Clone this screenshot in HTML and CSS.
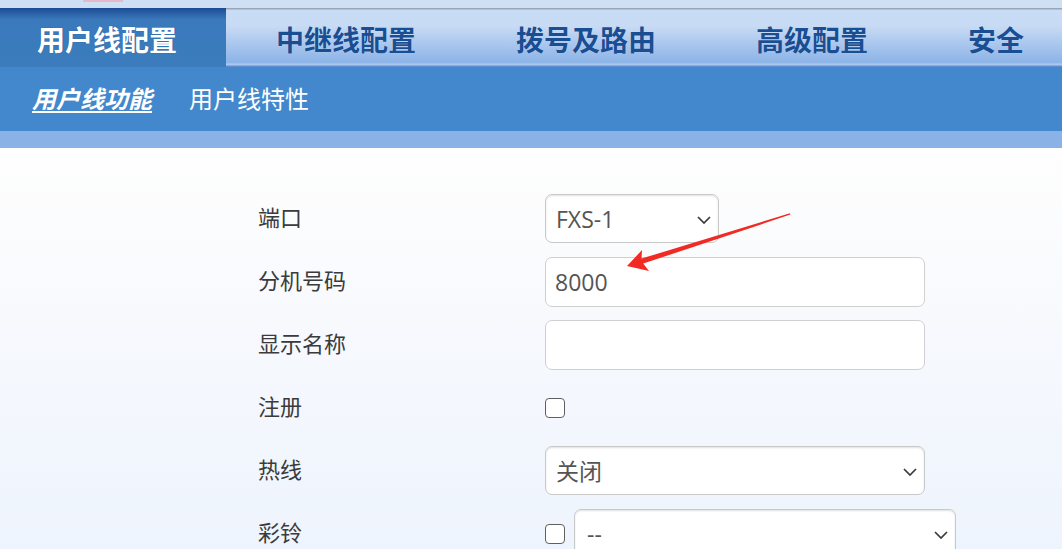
FILE: index.html
```html
<!DOCTYPE html>
<html lang="zh-CN">
<head>
<meta charset="utf-8">
<title>用户线配置</title>
<link rel="stylesheet" href="styles.css">
</head>
<body>
<div class="page">
  <div class="topstrip"><span class="logo-edge"></span></div>
  <nav class="tabs">
    <a class="tab active">用户线配置</a>
    <a class="tab">中继线配置</a>
    <a class="tab">拨号及路由</a>
    <a class="tab">高级配置</a>
    <a class="tab">安全</a>
  </nav>
  <div class="subnav">
    <a class="sub current">用户线功能</a>
    <a class="sub">用户线特性</a>
  </div>
  <div class="band"></div>
  <main class="content">
    <div class="form">
      <label class="lbl">端口</label>
      <div class="ctl">
        <div class="sel sel-short">
          <select><option>FXS-1</option></select>
          <svg class="chev" viewBox="0 0 14 8" width="14" height="8"><path d="M1 1 L7 7 L13 1" fill="none" stroke="#3a3a3a" stroke-width="1.7"/></svg>
        </div>
      </div>

      <label class="lbl">分机号码</label>
      <div class="ctl"><input class="txt" type="text" value="8000"></div>

      <label class="lbl">显示名称</label>
      <div class="ctl"><input class="txt" type="text" value=""></div>

      <label class="lbl">注册</label>
      <div class="ctl"><input class="chk" type="checkbox"></div>

      <label class="lbl">热线</label>
      <div class="ctl">
        <div class="sel sel-long">
          <select><option>关闭</option></select>
          <svg class="chev" viewBox="0 0 14 8" width="14" height="8"><path d="M1 1 L7 7 L13 1" fill="none" stroke="#3a3a3a" stroke-width="1.7"/></svg>
        </div>
      </div>

      <label class="lbl">彩铃</label>
      <div class="ctl ctl-pair">
        <input class="chk" type="checkbox">
        <div class="sel sel-long">
          <select><option>--</option></select>
          <svg class="chev" viewBox="0 0 14 8" width="14" height="8"><path d="M1 1 L7 7 L13 1" fill="none" stroke="#3a3a3a" stroke-width="1.7"/></svg>
        </div>
      </div>
    </div>
  </main>
  <svg class="annot" width="1062" height="549" viewBox="0 0 1062 549">
    <polygon points="627,266 642,250 641.5,258.6 790,213.2 790.4,214.6 643.2,263.6 649,271" fill="#f22a24"/>
  </svg>
</div>
</body>
</html>
```

FILE: styles.css
```css
html, body {
  margin: 0;
  padding: 0;
}
body {
  font-family: "Noto Sans CJK SC", "Noto Sans", sans-serif;
  background: #eef4fd;
}
.page {
  position: relative;
  width: 1062px;
  height: 549px;
  overflow: hidden;
  display: flex;
  flex-direction: column;
}
.topstrip {
  flex: 0 0 8px;
  background: #cfe0f5;
  display: flex;
}
.logo-edge {
  width: 40px;
  height: 2px;
  margin-left: 83px;
  background: #e7b9c8;
}
.tabs {
  flex: 0 0 59px;
  display: flex;
  align-items: stretch;
  background: linear-gradient(to bottom,
    #9aa6b6 0, #9aa6b6 1px,
    #c9dcf5 2px, #c8dbf4 30%,
    #a6c4ed 65%, #8cb4e7 92%,
    #a9c7ef 95%, #a9c7ef 97%,
    #5b8dd0 98%, #5b8dd0 100%);
}
.tab {
  display: flex;
  align-items: center;
  padding: 3px 50px 0;
  font-size: 28px;
  font-weight: 700;
  color: #1a4e93;
  text-shadow: 0 0 1px rgba(230, 240, 252, 0.9);
  white-space: nowrap;
}
.tab.active {
  padding-left: 37px;
  padding-right: 49px;
  color: #ffffff;
  text-shadow: 0 0 1px rgba(20, 60, 120, 0.6);
  background: linear-gradient(to bottom, #1c4b95 0, #2c63a9 6px, #3a7abc 12px, #3b7cbd 100%);
}
.subnav {
  flex: 0 0 64px;
  box-sizing: border-box;
  padding-bottom: 3px;
  background: #4388cc;
  display: flex;
  align-items: center;
  gap: 37px;
  padding-left: 32px;
}
.sub {
  font-size: 24px;
  color: #ffffff;
  white-space: nowrap;
}
.sub.current {
  font-weight: 700;
  font-style: italic;
  text-decoration: underline;
  text-underline-offset: 3px;
}
.band {
  flex: 0 0 17px;
  background: #8ab2e6;
}
.content {
  flex: 1 1 auto;
  min-height: 0;
  background: linear-gradient(to bottom, #fefefe 0, #f7f9fd 45%, #eef4fd 100%);
}
.form {
  display: grid;
  grid-template-columns: 287px auto;
  grid-auto-rows: 63px;
  align-items: center;
  margin-left: 258px;
  padding-top: 39px;
}
.lbl {
  font-size: 22px;
  color: #3b3b3b;
  padding-bottom: 5px;
}
.ctl {
  display: flex;
  align-items: center;
}
.ctl-pair {
  gap: 9px;
}
.sel {
  position: relative;
  height: 49px;
}
.sel-short { width: 174px; }
.sel-long { width: 380px; }
.ctl-pair .sel-long { width: 382px; }
.sel select,
.txt {
  appearance: none;
  -webkit-appearance: none;
  box-sizing: border-box;
  width: 100%;
  height: 100%;
  margin: 0;
  border: 1px solid #c9c9c9;
  border-radius: 7px;
  background: #ffffff;
  box-shadow: inset 0 1px 2px rgba(0, 0, 0, 0.12);
  font-family: "Open Sans", "Noto Sans CJK SC", sans-serif;
  font-size: 23px;
  color: #555555;
  padding: 0 30px 0 10px;
  outline: none;
}
.txt {
  width: 380px;
  height: 50px;
  padding-right: 10px;
  padding-left: 9px;
  box-shadow: none;
  border-color: #d0d0d0;
}
.ctl-pair .sel select {
  padding-left: 12px;
}
.chev {
  position: absolute;
  right: 8px;
  top: 50%;
  margin-top: -3px;
  pointer-events: none;
}
.chk {
  appearance: none;
  -webkit-appearance: none;
  box-sizing: border-box;
  width: 20px;
  height: 20px;
  margin: 0;
  border: 1.5px solid #606060;
  border-radius: 4px;
  background: #ffffff;
}
.annot {
  position: absolute;
  left: 0;
  top: 0;
  pointer-events: none;
}
```
